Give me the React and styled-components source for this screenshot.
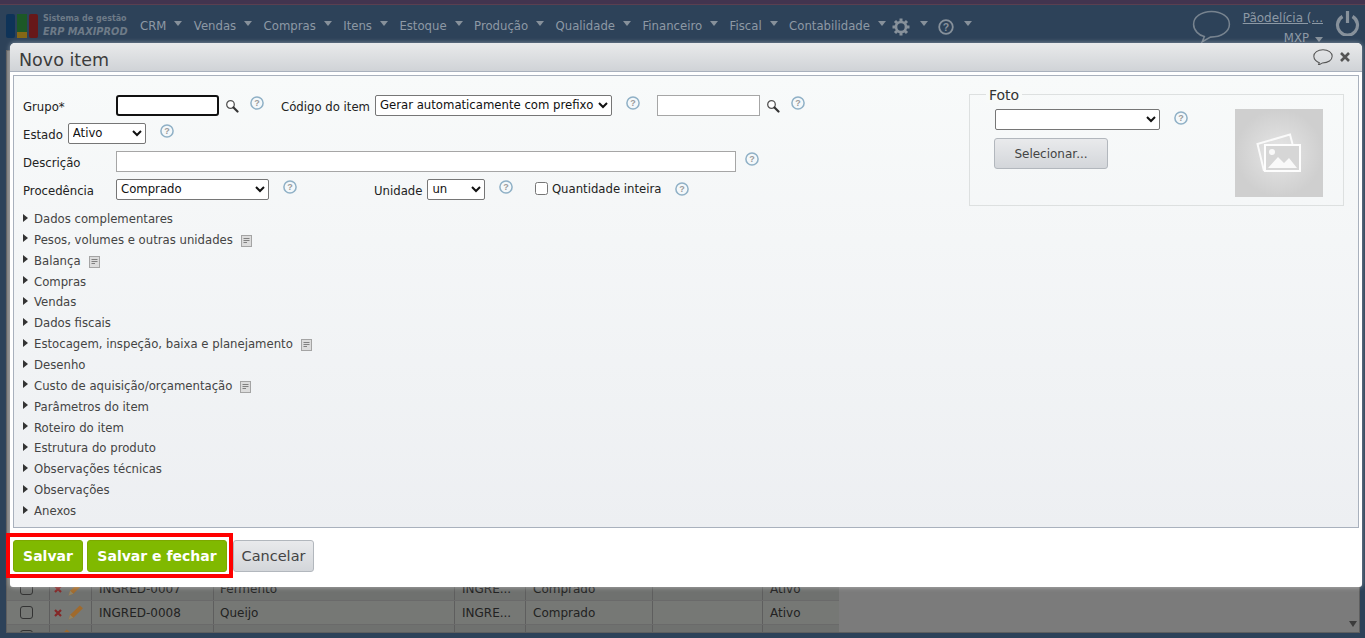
import styled, { createGlobalStyle } from "styled-components";

const GlobalStyle = createGlobalStyle`
  html, body {
    margin: 0;
    padding: 0;
    height: 100%;
    overflow: hidden;
    background: #2d4259;
    font-family: "DejaVu Sans", Verdana, sans-serif;
    font-size: 11.7px;
  }
`;

const MENU = [
  "CRM",
  "Vendas",
  "Compras",
  "Itens",
  "Estoque",
  "Produção",
  "Qualidade",
  "Financeiro",
  "Fiscal",
  "Contabilidade",
];

const SECTIONS = [
  { name: "Dados complementares" },
  { name: "Pesos, volumes e outras unidades", note: true },
  { name: "Balança", note: true },
  { name: "Compras" },
  { name: "Vendas" },
  { name: "Dados fiscais" },
  { name: "Estocagem, inspeção, baixa e planejamento", note: true },
  { name: "Desenho" },
  { name: "Custo de aquisição/orçamentação", note: true },
  { name: "Parâmetros do item" },
  { name: "Roteiro do item" },
  { name: "Estrutura do produto" },
  { name: "Observações técnicas" },
  { name: "Observações" },
  { name: "Anexos" },
];

const ROWS = [
  { code: "INGRED-0007", name: "Fermento" },
  { code: "INGRED-0008", name: "Queijo" },
  { code: "", name: "" },
];

const SearchIcon = () => (
  <svg width="14" height="14" viewBox="0 0 14 14">
    <circle cx="5.5" cy="5.5" r="3.8" fill="#fff" stroke="#555" strokeWidth="1.3" />
    <path d="M8.5 8.5 L12.5 12.5" stroke="#333" strokeWidth="2.2" strokeLinecap="round" />
  </svg>
);

const HelpIcon = () => (
  <svg width="14" height="14" viewBox="0 0 14 14">
    <circle cx="7" cy="7" r="6.1" fill="#f4f8fa" stroke="#8fb0c6" strokeWidth="1.5" />
    <text x="7" y="10.2" textAnchor="middle" fontSize="9" fontWeight="bold" fill="#9a9a9a" fontFamily="Liberation Sans, sans-serif">
      ?
    </text>
  </svg>
);

const NoteIcon = () => (
  <svg width="11" height="12" viewBox="0 0 11 12">
    <rect x="0.5" y="0.5" width="10" height="11" fill="#dcdcdc" stroke="#a4a4a4" />
    <path d="M2.5 3.5H8.5M2.5 5.5H8.5M2.5 7.5H6" stroke="#808080" strokeWidth="1" />
  </svg>
);

const GearIcon = () => (
  <svg width="18" height="18" viewBox="0 0 18 18">
    <g stroke="#87919b" strokeWidth="3">
      <path d="M9 0.5V17.5M0.5 9H17.5M3 3L15 15M15 3L3 15" />
    </g>
    <circle cx="9" cy="9" r="5" fill="#2d4259" stroke="#87919b" strokeWidth="2.6" />
  </svg>
);

const TopHelpIcon = () => (
  <svg width="16" height="16" viewBox="0 0 16 16">
    <circle cx="8" cy="8" r="6.8" fill="none" stroke="#87919b" strokeWidth="1.8" />
    <text x="8" y="12" textAnchor="middle" fontSize="10.5" fontWeight="bold" fill="#87919b" fontFamily="Liberation Sans, sans-serif">
      ?
    </text>
  </svg>
);

const Bubble = ({ size, stroke, width }) => (
  <svg width={size} height={size * 0.84} viewBox="0 0 38 32">
    <path
      d="M19 1.5C9 1.5 1.5 7 1.5 14C1.5 20 7 25 12 26L10 31L18 26.5C29 26.5 36.5 21 36.5 14C36.5 7 29 1.5 19 1.5Z"
      fill="none"
      stroke={stroke}
      strokeWidth={width}
    />
  </svg>
);

const PowerIcon = () => (
  <svg width="25" height="26" viewBox="0 0 25 26">
    <path d="M7.5 6.5A10 10 0 1 0 17.5 6.5" fill="none" stroke="#87919b" strokeWidth="3.2" />
    <path d="M12.5 1V13" stroke="#87919b" strokeWidth="3.2" />
  </svg>
);

const PhotoIcon = () => (
  <svg width="46" height="40" viewBox="0 0 46 40">
    <path d="M8 38L1.5 11L34 1.5L36.5 11" fill="none" stroke="#fff" strokeWidth="2" opacity="0.85" />
    <rect x="9" y="12" width="35" height="26" fill="#d6d6d6" stroke="#fff" strokeWidth="2" opacity="0.95" />
    <circle cx="16" cy="19" r="3" fill="#fff" opacity="0.85" />
    <path d="M12 35L22 24L28 30L33 25L41 35Z" fill="#fff" opacity="0.85" />
  </svg>
);

const PencilIcon = () => (
  <svg width="17" height="17" viewBox="0 0 16 16">
    <path d="M1.5 14.5L3 10L12 1.5L15 4L6 13Z" fill="#a06a2c" />
    <path d="M1.5 14.5L3 10L6 13Z" fill="#8f8468" />
  </svg>
);

const RedXIcon = () => (
  <svg width="8" height="8" viewBox="0 0 8 8">
    <path d="M1 1L7 7M7 1L1 7" stroke="#842828" strokeWidth="2.2" />
  </svg>
);

const CloseIcon = () => (
  <svg width="10" height="10" viewBox="0 0 10 10">
    <path d="M1 1L9 9M9 1L1 9" stroke="#555" strokeWidth="2.6" />
  </svg>
);

const App = () => {
  return (
    <>
      <GlobalStyle />
      <Page>
        <TopStrip />
        <Header>
          <Logo>
            <LogoMark>
              <LogoBar $color="#0d3358" />
              <LogoMid>
                <LogoCell $color="#1c5a24" $flex={3} />
                <LogoCell $color="#8a6a12" $flex={1} />
              </LogoMid>
              <LogoBar $color="#6b1616" />
            </LogoMark>
            <LogoText>
              <LogoTop>Sistema de gestão</LogoTop>
              <LogoName>ERP MAXIPROD</LogoName>
            </LogoText>
          </Logo>
          <Menu>
            {MENU.map((item) => (
              <MenuItem key={item}>
                {item}
                <Caret />
              </MenuItem>
            ))}
            <GearItem>
              <GearIcon />
              <Caret />
            </GearItem>
            <IconItem>
              <TopHelpIcon />
              <Caret />
            </IconItem>
          </Menu>
          <UserArea>
            <Bubble size={39} stroke="#77838f" width={1.5} />
            <UserInfo>
              <UserName>Pãodelícia (...</UserName>
              <UserCompany>
                MXP
                <CompanyCaret />
              </UserCompany>
            </UserInfo>
            <PowerIcon />
          </UserArea>
        </Header>
        <Behind>
          <Table>
            {ROWS.map((row, i) => (
              <TableRow key={i} $alt={i % 2 === 1}>
                <CheckCell>
                  <FakeCheck />
                </CheckCell>
                <ActionCell>
                  {row.code && <RedXIcon />}
                  <PencilIcon />
                </ActionCell>
                <CodeCell>{row.code}</CodeCell>
                <NameCell>{row.name}</NameCell>
                <GroupCell>{row.code && "INGRE..."}</GroupCell>
                <OriginCell>{row.code && "Comprado"}</OriginCell>
                <EmptyCell />
                <StateCell>{row.code && "Ativo"}</StateCell>
              </TableRow>
            ))}
          </Table>
          <ScrollCaret />
        </Behind>
      </Page>

      <Dialog>
        <TitleBar>
          <Title>Novo item</Title>
          <TitleTools>
            <Bubble size={20} stroke="#555" width={2} />
            <CloseIcon />
          </TitleTools>
        </TitleBar>

        <Panel>
          <FormArea>
            <FormFields>
              <Row>
                <LabelFixed>Grupo*</LabelFixed>
                <FocusInput />
                <IconGap $left={6}>
                  <SearchIcon />
                </IconGap>
                <IconGap $left={11} $top={-5}>
                  <HelpIcon />
                </IconGap>
                <Label $left={17}>Código do item</Label>
                <Select $w={237} $left={5}>
                  <option>Gerar automaticamente com prefixo</option>
                </Select>
                <IconGap $left={14} $top={-5}>
                  <HelpIcon />
                </IconGap>
                <PlainInput $w={103} $left={17} />
                <IconGap $left={6}>
                  <SearchIcon />
                </IconGap>
                <IconGap $left={11} $top={-5}>
                  <HelpIcon />
                </IconGap>
              </Row>
              <Row>
                <Label>Estado</Label>
                <Select $w={78} $left={5}>
                  <option>Ativo</option>
                </Select>
                <IconGap $left={14} $top={-4}>
                  <HelpIcon />
                </IconGap>
              </Row>
              <Row>
                <LabelFixed>Descrição</LabelFixed>
                <PlainInput $w={620} />
                <IconGap $left={9} $top={-4}>
                  <HelpIcon />
                </IconGap>
              </Row>
              <Row>
                <LabelFixed>Procedência</LabelFixed>
                <Select $w={153}>
                  <option>Comprado</option>
                </Select>
                <IconGap $left={14} $top={-4}>
                  <HelpIcon />
                </IconGap>
                <Label $left={77}>Unidade</Label>
                <Select $w={58} $left={5}>
                  <option>un</option>
                </Select>
                <IconGap $left={14} $top={-4}>
                  <HelpIcon />
                </IconGap>
                <Check type="checkbox" />
                <CheckLabel>Quantidade inteira</CheckLabel>
                <IconGap $left={14} $top={-1}>
                  <HelpIcon />
                </IconGap>
              </Row>
            </FormFields>

            <PhotoBox>
              <PhotoLegend>Foto</PhotoLegend>
              <PhotoControls>
                <PhotoSelectRow>
                  <Select $w={165}>
                    <option></option>
                  </Select>
                  <IconGap $left={14} $top={-4}>
                    <HelpIcon />
                  </IconGap>
                </PhotoSelectRow>
                <SelectButton>Selecionar...</SelectButton>
              </PhotoControls>
              <PhotoThumb>
                <PhotoIcon />
              </PhotoThumb>
            </PhotoBox>
          </FormArea>

          <Sections>
            {SECTIONS.map((s) => (
              <Section key={s.name}>
                <Arrow />
                <span>{s.name}</span>
                {s.note && (
                  <NoteWrap>
                    <NoteIcon />
                  </NoteWrap>
                )}
              </Section>
            ))}
          </Sections>
        </Panel>

        <Footer>
          <Highlight />
          <GreenButton $w={70}>Salvar</GreenButton>
          <GreenButton $w={140}>Salvar e fechar</GreenButton>
          <CancelButton>Cancelar</CancelButton>
        </Footer>
      </Dialog>
    </>
  );
};

export default App;

// page behind the dialog

const Page = styled.div`
  height: 638px;
  display: flex;
  flex-direction: column;
  background: #2d4259;
`;

const TopStrip = styled.div`
  height: 5px;
  background: #42344f;
  border-bottom: 1px solid #5a3f50;
  box-sizing: border-box;
`;

const Header = styled.div`
  height: 38px;
  display: flex;
  align-items: flex-start;
  padding-left: 6px;
  color: #8d99a5;
`;

const Logo = styled.div`
  display: flex;
  width: 134px;
  padding-top: 8px;
`;

const LogoMark = styled.div`
  display: flex;
  gap: 2px;
  width: 32px;
  height: 24px;
  margin-top: 1px;
  opacity: 0.95;
`;

const LogoBar = styled.div`
  flex: 1;
  border-radius: 2px;
  background: ${(p) => p.$color};
`;

const LogoMid = styled.div`
  flex: 1;
  display: flex;
  flex-direction: column;
`;

const LogoCell = styled.div`
  flex: ${(p) => p.$flex};
  background: ${(p) => p.$color};
`;

const LogoText = styled.div`
  margin-left: 5px;
  color: #6e7b88;
  font-weight: bold;
  white-space: nowrap;
`;

const LogoTop = styled.div`
  font-size: 8px;
  line-height: 12px;
  margin-top: 0;
`;

const LogoName = styled.div`
  font-size: 9.8px;
  line-height: 14px;
  font-style: italic;
`;

const Menu = styled.div`
  display: flex;
  align-items: center;
  height: 43px;
  margin-top: -5px;
  padding-top: 8px;
  box-sizing: border-box;
`;

const MenuItem = styled.div`
  display: flex;
  align-items: center;
  margin-right: 11.45px;
  white-space: nowrap;
`;

const Caret = styled.i`
  display: inline-block;
  width: 0;
  height: 0;
  margin-left: 8px;
  margin-top: -4px;
  border-left: 4.5px solid transparent;
  border-right: 4.5px solid transparent;
  border-top: 5px solid #87919b;
`;

const CompanyCaret = styled(Caret)`
  margin-left: 6px;
`;

const IconItem = styled.div`
  display: flex;
  align-items: center;
  margin-right: 8px;
  svg {
    margin-top: 3px;
    margin-right: 2px;
  }
`;

const GearItem = styled(IconItem)`
  margin-left: -5px;
  margin-right: 10px;
`;

const UserArea = styled.div`
  margin-left: auto;
  display: flex;
  align-items: flex-start;
  padding: 5px 5px 0 0;
`;

const UserInfo = styled.div`
  width: 84px;
  margin-left: 8px;
  margin-right: 12px;
  text-align: right;
  margin-top: 1px;
  white-space: nowrap;
`;

const UserName = styled.div`
  font-size: 12px;
  text-decoration: underline;
  line-height: 14px;
`;

const UserCompany = styled.div`
  margin-top: 6px;
  line-height: 14px;
`;

const Behind = styled.div`
  position: relative;
  flex: 1;
  margin: 7px 5px 5px 6px;
  background: #7b7b7b;
  border: 1px solid #5f5f5f;
  display: flex;
  flex-direction: column;
  justify-content: flex-end;
  overflow: hidden;
`;

const ScrollCaret = styled.i`
  position: absolute;
  right: 2px;
  bottom: 5px;
  width: 0;
  height: 0;
  border-left: 4.5px solid transparent;
  border-right: 4.5px solid transparent;
  border-top: 6px solid #3c3c3c;
`;

const Table = styled.div`
  width: 832px;
  margin-bottom: -17px;
  color: #222;
  font-size: 12px;
  flex-shrink: 0;
`;

const TableRow = styled.div`
  display: flex;
  height: 24px;
  background: ${(p) => (p.$alt ? "#767875" : "#6f716f")};
  border-bottom: 1px solid #6a6a6a;
  box-sizing: border-box;
  line-height: 25px;
`;

const Cell = styled.div`
  border-right: 1px solid #5e5e5e;
  box-sizing: border-box;
  white-space: nowrap;
  overflow: hidden;
  padding-left: 7px;
`;

const CheckCell = styled(Cell)`
  width: 43px;
  padding: 5px 0 0 13px;
`;

const FakeCheck = styled.div`
  width: 13px;
  height: 13px;
  box-sizing: border-box;
  border: 1px solid #333;
  border-radius: 3px;
`;

const ActionCell = styled(Cell)`
  width: 42px;
  padding-left: 4px;
  display: flex;
  align-items: center;
  gap: 5px;
`;

const CodeCell = styled(Cell)`
  width: 122px;
`;

const NameCell = styled(Cell)`
  width: 241px;
  padding-left: 6px;
`;

const GroupCell = styled(Cell)`
  width: 71px;
`;

const OriginCell = styled(Cell)`
  width: 127px;
`;

const EmptyCell = styled(Cell)`
  width: 110px;
`;

const StateCell = styled(Cell)`
  width: 76px;
  border-right: 0;
`;

// dialog

const Dialog = styled.div`
  position: absolute;
  left: 10px;
  top: 43px;
  width: 1352px;
  height: 544px;
  display: flex;
  flex-direction: column;
  background: #fff;
  border-radius: 5px 5px 3px 3px;
  box-shadow: 0 0 5px rgba(255, 255, 255, 0.45);
`;

const TitleBar = styled.div`
  height: 29px;
  flex-shrink: 0;
  display: flex;
  align-items: center;
  justify-content: space-between;
  padding: 0 12px 0 9px;
  background: linear-gradient(#e9eaeb, #d0d3d7);
  border-radius: 5px 5px 0 0;
  border-bottom: 1px solid #a9b1bd;
  box-sizing: border-box;
`;

const Title = styled.div`
  font-size: 17.5px;
  color: #3c3c3c;
  padding-top: 6px;
`;

const TitleTools = styled.div`
  display: flex;
  align-items: center;
  gap: 7px;
`;

const Panel = styled.div`
  height: 453px;
  margin: 3px 3px 0;
  border: 1px solid #a9b1bd;
  box-sizing: border-box;
  background: linear-gradient(#f8fafa, #edeff2);
  padding: 0 14px 0 9px;
  display: flex;
  flex-direction: column;
`;

const FormArea = styled.div`
  display: flex;
  justify-content: space-between;
  padding-top: 15px;
`;

const FormFields = styled.div`
  display: flex;
  flex-direction: column;
`;

const Row = styled.div`
  display: flex;
  align-items: center;
  height: 28px;
`;

const Label = styled.label`
  color: #222;
  margin-left: ${(p) => p.$left || 0}px;
  white-space: nowrap;
  padding-top: 3px;
`;

const LabelFixed = styled(Label)`
  width: 93px;
`;

const FocusInput = styled.div`
  width: 103px;
  height: 21px;
  background: #fff;
  border: 2px solid #111;
  border-radius: 3px;
  box-sizing: border-box;
`;

const PlainInput = styled.input`
  width: ${(p) => p.$w}px;
  height: 21px;
  margin: 0 0 0 ${(p) => p.$left || 0}px;
  padding: 0 4px;
  border: 1px solid #a6a6a6;
  background: #fff;
  box-sizing: border-box;
`;

const Select = styled.select`
  width: ${(p) => p.$w}px;
  height: 21px;
  margin: 0 0 0 ${(p) => p.$left || 0}px;
  border: 1px solid #767676;
  border-radius: 2px;
  background: #fff;
  color: #111;
  font-family: "DejaVu Sans", Verdana, sans-serif;
  font-size: 11.7px;
  box-sizing: border-box;
`;

const IconGap = styled.span`
  display: inline-flex;
  margin-left: ${(p) => p.$left}px;
  margin-top: ${(p) => p.$top || 1}px;
`;

const Check = styled.input`
  width: 13px;
  height: 13px;
  margin: -1px 0 0 21.5px;
`;

const CheckLabel = styled.label`
  margin-left: 4px;
  color: #222;
  white-space: nowrap;
`;

const PhotoBox = styled.div`
  position: relative;
  width: 375px;
  height: 112px;
  margin-top: 3px;
  border: 1px solid #dde0e0;
  box-sizing: border-box;
  display: flex;
`;

const PhotoLegend = styled.div`
  position: absolute;
  top: -8px;
  left: 16px;
  padding: 0 3px;
  background: #f8faf9;
  font-size: 14px;
  line-height: 16px;
  color: #333;
`;

const PhotoControls = styled.div`
  padding: 14px 0 0 24px;
  display: flex;
  flex-direction: column;
  gap: 8px;
`;

const PhotoSelectRow = styled.div`
  display: flex;
  align-items: center;
  margin-left: 1px;
`;

const PhotoThumb = styled.div`
  width: 88px;
  height: 88px;
  margin: 14px 20px 0 auto;
  background: radial-gradient(circle, #e6e6e6 0%, #cfcfcf 70%);
  display: flex;
  align-items: center;
  justify-content: center;
`;

const Sections = styled.div`
  margin-top: 2.6px;
  display: flex;
  flex-direction: column;
`;

const Section = styled.div`
  display: flex;
  align-items: center;
  height: 20.86px;
  color: #444;
  white-space: nowrap;
`;

const Arrow = styled.i`
  display: inline-block;
  width: 0;
  height: 0;
  margin-right: 6px;
  margin-top: -3px;
  border-top: 4.5px solid transparent;
  border-bottom: 4.5px solid transparent;
  border-left: 5px solid #333;
`;

const NoteWrap = styled.span`
  display: inline-flex;
  margin-left: 8px;
  margin-top: 2px;
`;

const Footer = styled.div`
  position: relative;
  display: flex;
  align-items: flex-start;
  gap: 4px;
  padding: 12px 0 0 3px;
`;

const Highlight = styled.div`
  position: absolute;
  left: -4px;
  top: 5px;
  width: 227px;
  height: 45px;
  border: 4px solid #f00;
  box-sizing: border-box;
  pointer-events: none;
`;

const GreenButton = styled.button`
  width: ${(p) => p.$w}px;
  height: 32px;
  padding: 0;
  border: 1px solid #7da800;
  border-radius: 3px;
  background: #80b900;
  color: #fff;
  font-family: "DejaVu Sans", Verdana, sans-serif;
  font-size: 14px;
  font-weight: bold;
`;

const GrayButton = styled.button`
  padding: 0;
  border: 1px solid #b2b7bd;
  border-radius: 3px;
  background: linear-gradient(#e9eaec, #d3d6da);
  color: #444;
  font-family: "DejaVu Sans", Verdana, sans-serif;
`;

const SelectButton = styled(GrayButton)`
  width: 114px;
  height: 31px;
  font-size: 12px;
`;

const CancelButton = styled(GrayButton)`
  width: 81px;
  height: 32px;
  margin-left: 2px;
  font-size: 14.5px;
`;
